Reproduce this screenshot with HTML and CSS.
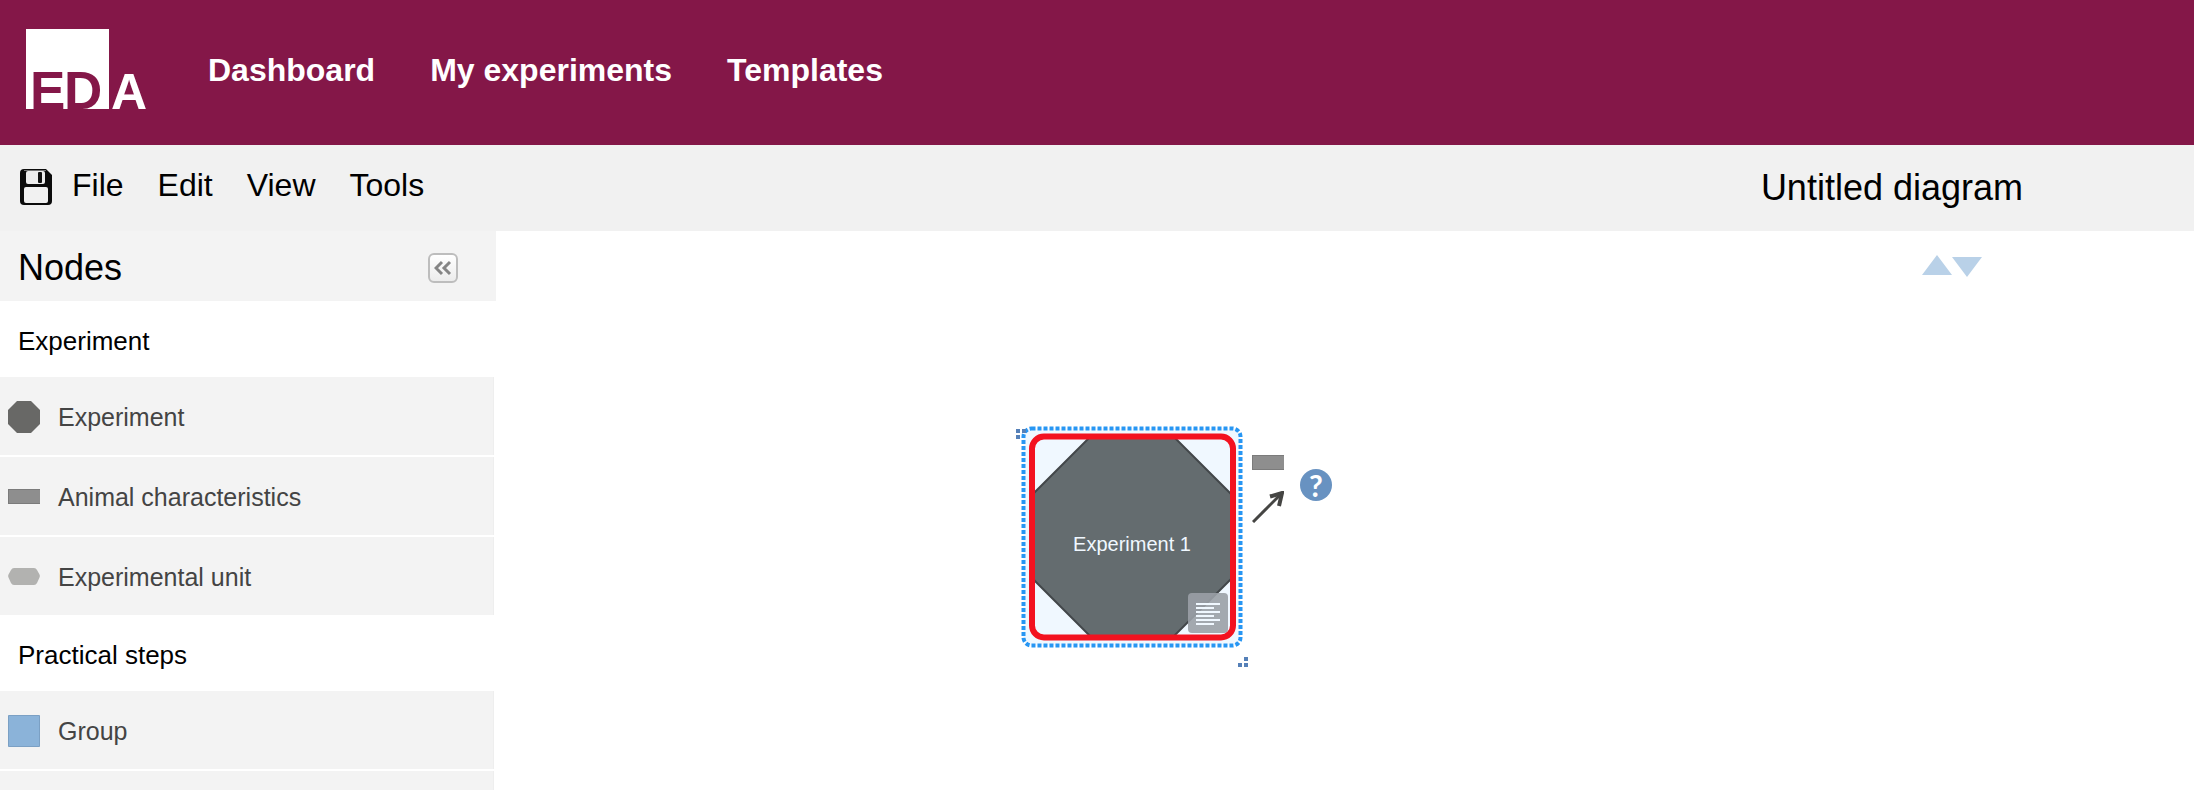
FILE: index.html
```html
<!DOCTYPE html>
<html lang="en">
<head>
<meta charset="utf-8">
<title>Untitled diagram</title>
<link rel="stylesheet" href="styles.css">
</head>
<body>
<div class="app">
  <header class="header">
    <a class="logo" href="#">
      <svg width="122" height="80" viewBox="0 0 122 80" role="img">
        <path class="logo-box" d="M0 0h83v80H0z"/>
        <text class="logo-cut" x="4" y="80">E</text>
        <text class="logo-cut" x="38" y="80">D</text>
        <text class="logo-open" x="85" y="80">A</text>
      </svg>
    </a>
    <nav class="nav">
      <a href="#">Dashboard</a>
      <a href="#">My experiments</a>
      <a href="#">Templates</a>
    </nav>
  </header>

  <div class="toolbar">
    <button class="save" type="button" aria-label="Save">
      <svg width="32" height="36" viewBox="0 0 32 36">
        <path d="M4 0h22l6 6v26q0 4-4 4H4q-4 0-4-4V4q0-4 4-4z" fill="#0c0c0c"/>
        <path d="M4 1.500h22" stroke="#777" fill="none"/>
        <rect x="6" y="2" width="19" height="13" rx="2" fill="#ededed"/>
        <rect x="18" y="3" width="4" height="11" rx="1" fill="#111"/>
        <rect x="4" y="18" width="24" height="16" rx="2" fill="#f1f1f1"/>
      </svg>
    </button>
    <div class="menu">
      <button type="button">File</button>
      <button type="button">Edit</button>
      <button type="button">View</button>
      <button type="button">Tools</button>
    </div>
    <h1 class="title">Untitled diagram</h1>
  </div>

  <div class="workspace">
    <aside class="sidebar">
      <div class="sidebar-head">
        <h2>Nodes</h2>
        <button class="collapse" type="button" aria-label="Collapse panel">
          <svg width="18" height="16" viewBox="0 0 18 16"><path d="M8 2L2 8l6 6M16 2l-6 6 6 6" fill="none" stroke="#858585" stroke-width="3"/></svg>
        </button>
      </div>
      <h3 class="group">Experiment</h3>
      <div class="items">
        <button class="item" type="button">
          <svg width="32" height="32" viewBox="0 0 32 32"><path d="M9 0h14l9 9v14l-9 9H9l-9-9V9z" fill="#686866"/></svg>
          Experiment
        </button>
        <button class="item" type="button">
          <svg width="32" height="32" viewBox="0 0 32 32"><path d="M0 8h32v15H0z" fill="#8e8e8e"/><path d="M0 8.500h32M0 22.500h32M.5 8v15" stroke="#7b7b7b" fill="none"/></svg>
          Animal characteristics
        </button>
        <button class="item" type="button">
          <svg width="32" height="32" viewBox="0 0 32 32"><path d="M6 7h20q2 0 3 2l2.500 4.500q.7 1.500 0 3L29 22q-1 2-3 2H6q-2 0-3-2L.5 16.500q-.7-1.500 0-3L3 9q1-2 3-2z" fill="#b2b2b0"/></svg>
          Experimental unit
        </button>
      </div>
      <h3 class="group">Practical steps</h3>
      <div class="items">
        <button class="item" type="button">
          <svg width="32" height="32" viewBox="0 0 32 32"><path d="M.5.5h31v31H.5z" fill="#8bb3d9" stroke="#7ba0c4"/></svg>
          Group
        </button>
        <div class="item"></div>
      </div>
    </aside>

    <main class="canvas">
      <div class="order">
        <button type="button" aria-label="Previous"><svg width="30" height="22" viewBox="0 0 30 22"><path d="M15 0l15 20H0z" fill="#b9d1e8"/></svg></button>
        <button type="button" aria-label="Next"><svg width="30" height="22" viewBox="0 0 30 22"><path d="M0 2h30L15 22z" fill="#b9d1e8"/></svg></button>
      </div>

      <div class="node">
        <svg class="node-shape" width="222" height="222" viewBox="0 0 222 222">
          <rect x="2.500" y="2.500" width="217" height="217" rx="8" fill="#f0f8ff"/>
          <path d="M69 11h84l58 58v83l-59 59H70l-59-59V69z" fill="#646c6f" stroke="#43474a" stroke-width="2"/>
          <rect class="note-bg" x="167" y="167" width="40" height="40" rx="4"/>
          <path d="M175 178h24M175 182h18M175 186h24M175 190h18M175 194h24M175 198h18" stroke="#f0f8ff" stroke-width="2"/>
          <rect x="11" y="10.500" width="201" height="201" rx="12" fill="none" stroke="#f31220" stroke-width="6"/>
          <rect x="2.500" y="2.500" width="217" height="217" rx="8" fill="none" stroke="#2796f3" stroke-width="4" stroke-dasharray="4 2"/>
        </svg>
        <span class="node-label">Experiment 1</span>
      </div>

      <svg class="grip grip-start" width="10" height="10" viewBox="0 0 10 10"><path d="M0 0h4v4H0zM6 0h4v4H6zM0 6h4v4H0z" fill="#5580b8"/></svg>
      <svg class="grip grip-end" width="10" height="10" viewBox="0 0 10 10"><path d="M6 0h4v4H6zM0 6h4v4H0zM6 6h4v4H6z" fill="#5580b8"/></svg>

      <button class="tool tool-rect" type="button" aria-label="Add animal characteristics">
        <svg width="32" height="15" viewBox="0 0 32 15"><path d="M0 0h32v15H0z" fill="#8e8e8e"/><path d="M0 .5h32M0 14.500h32M.5 0v15" stroke="#7b7b7b" fill="none"/></svg>
      </button>
      <button class="tool tool-link" type="button" aria-label="Add link">
        <svg width="32" height="32" viewBox="0 0 32 32"><path d="M1 31L29 3" fill="none" stroke="#454543" stroke-width="3"/><path d="M18 5.500L30 2l-3 13" fill="none" stroke="#454543" stroke-width="4"/></svg>
      </button>
      <button class="tool tool-help" type="button">?</button>
    </main>
  </div>
</div>
</body>
</html>
```

FILE: styles.css
```css
* {
  box-sizing: border-box;
}

body {
  margin: 0;
  font-family: "Liberation Sans", Arial, sans-serif;
  color: #000;
  background: #fff;
}

button {
  margin: 0;
  padding: 0;
  border: 0;
  background: none;
  font: inherit;
  color: inherit;
  cursor: pointer;
}

h1,
h2,
h3 {
  margin: 0;
  font-weight: 400;
}

svg {
  display: block;
}

.app {
  display: flex;
  flex-direction: column;
  height: 100vh;
  overflow: hidden;
}

.header {
  display: flex;
  gap: 60px;
  padding: 29px 26px 36px;
  background: #841748;
}

.logo svg {
  overflow: visible;
}

.logo-box,
.logo-open {
  fill: #fff;
}

.logo-cut {
  fill: #841748;
}

.logo-cut,
.logo-open {
  font-size: 53px;
  font-weight: 700;
}

.logo-open {
  font-size: 50px;
}

.nav {
  display: flex;
  gap: 55px;
  padding-top: 23px;
  font-size: 32px;
  font-weight: 700;
  line-height: 36px;
}

.nav a {
  color: #fff;
  text-decoration: none;
}

.toolbar {
  display: flex;
  align-items: flex-start;
  padding: 22px 171px 22px 20px;
  background: #f1f1f1;
}

.save {
  padding-top: 2px;
}

.menu {
  display: flex;
  gap: 34px;
  padding-left: 20px;
  font-size: 32px;
  line-height: 36px;
}

.title {
  margin-left: auto;
  font-size: 36px;
  line-height: 42px;
}

.workspace {
  display: flex;
  flex: 1;
  min-height: 0;
}

.sidebar {
  width: 496px;
  flex: none;
}

.sidebar-head {
  display: flex;
  align-items: center;
  justify-content: space-between;
  padding: 16px 38px 12px 18px;
  background: #f3f3f3;
}

.sidebar-head h2 {
  font-size: 36px;
  line-height: 42px;
}

.collapse {
  display: grid;
  place-items: center;
  width: 30px;
  height: 30px;
  border: 2px solid #bdbdbd;
  border-radius: 6px;
  background: linear-gradient(#fff, #ececec);
}

.group {
  padding: 25px 18px 21px;
  font-size: 26px;
  line-height: 30px;
}

.items {
  display: flex;
  flex-direction: column;
  gap: 2px;
  margin-right: 2px;
}

.item {
  display: flex;
  align-items: center;
  gap: 18px;
  min-height: 78px;
  padding: 2px 8px 0;
  border-right: 1px solid #eee;
  background: #f3f3f3;
  color: #444;
  font-size: 25px;
  text-align: left;
}

.canvas {
  position: relative;
  flex: 1;
}

.order {
  position: absolute;
  top: 24px;
  right: 212px;
  display: flex;
}

.node {
  position: absolute;
  left: 525px;
  top: 195px;
}

.node-label {
  position: absolute;
  inset: 0;
  display: grid;
  place-items: center;
  padding-top: 14px;
  color: #f0f8ff;
  font-size: 20px;
}

.note-bg {
  fill: #9aa0a6;
  fill-opacity: 0.9;
}

.grip {
  position: absolute;
}

.grip-start {
  left: 520px;
  top: 198px;
}

.grip-end {
  left: 742px;
  top: 426px;
}

.tool {
  position: absolute;
}

.tool-rect {
  left: 756px;
  top: 224px;
}

.tool-link {
  left: 756px;
  top: 260px;
}

.tool-help {
  left: 804px;
  top: 238px;
  width: 32px;
  height: 32px;
  border-radius: 50%;
  background: #6892c1;
  color: #fff;
  font-family: Lato, sans-serif;
  font-size: 30px;
  font-weight: 700;
  line-height: 32px;
}
```
